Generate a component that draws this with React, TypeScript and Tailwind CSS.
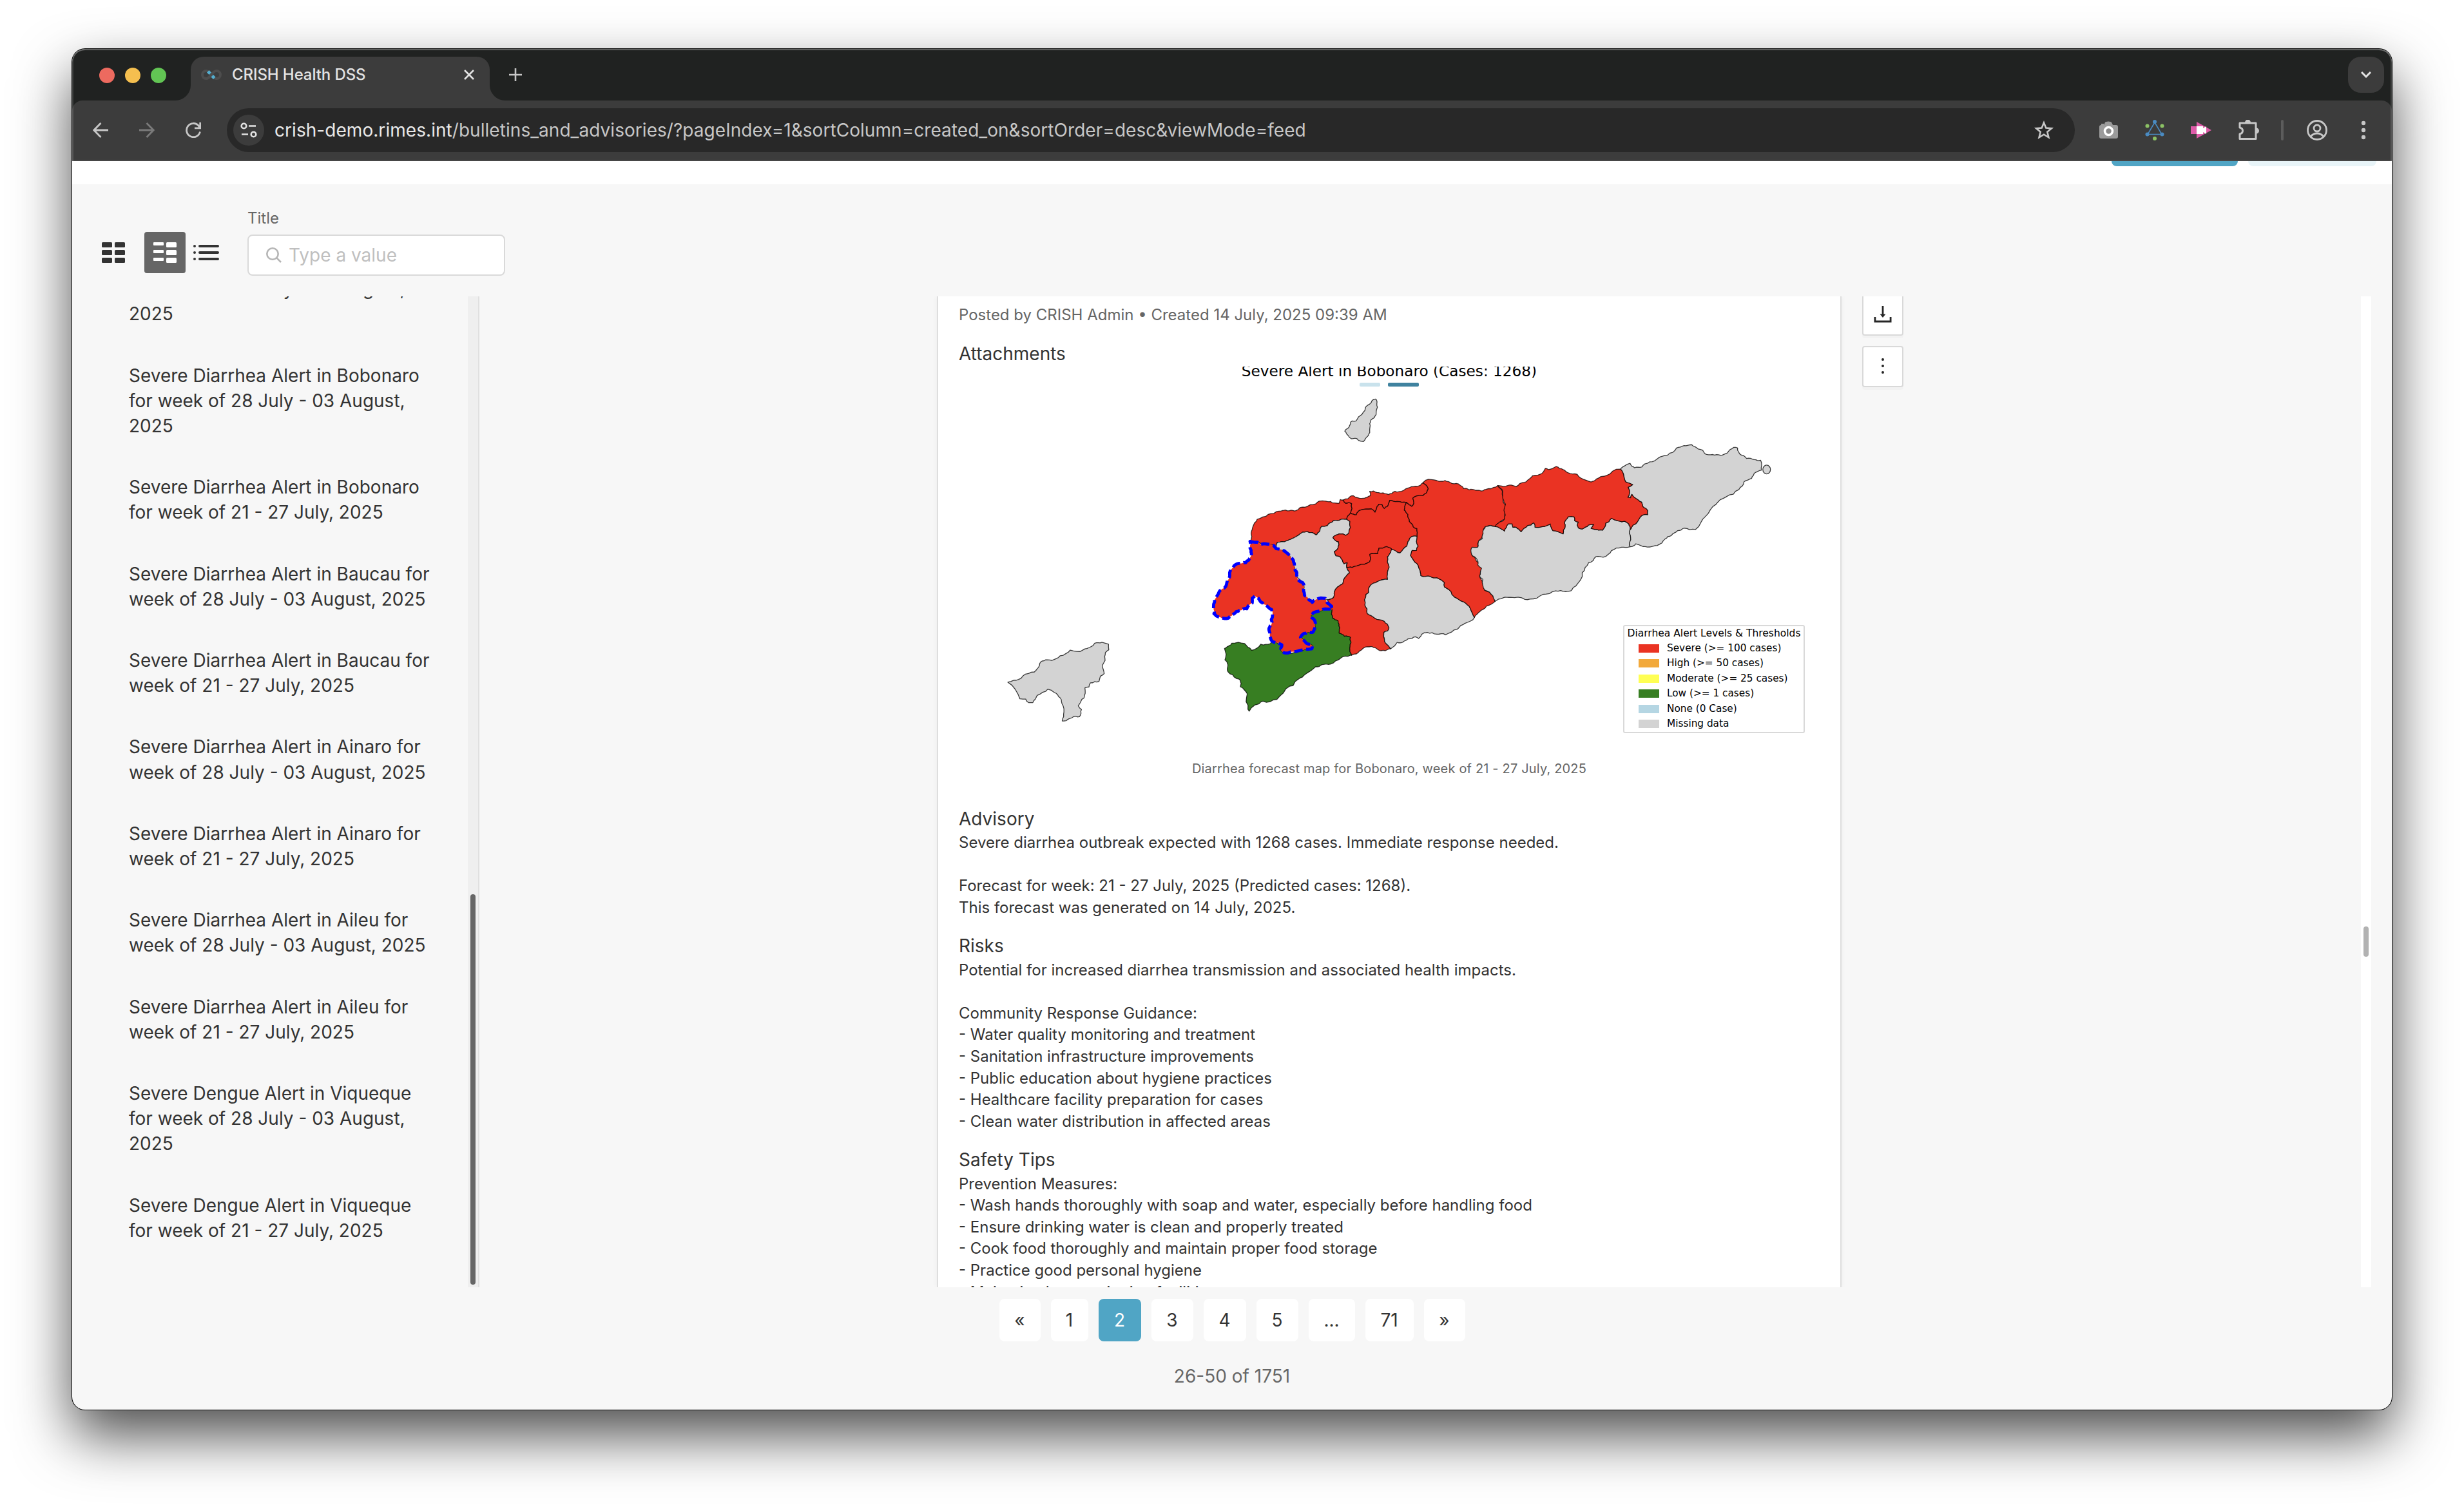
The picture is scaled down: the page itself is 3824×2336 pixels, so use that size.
import React from "react";

type Pt = [number, number];

const pts = (s: string): Pt[] =>
  s
    .trim()
    .split(/\s+/)
    .map((p) => p.split(",").map(Number) as Pt);

// Deterministic offset that is identical for both directions of a shared border.
const hash = (a: Pt, b: Pt) => {
  const v = Math.sin((a[0] + b[0]) * 12.9898 + (a[1] + b[1]) * 78.233) * 43758.5453;
  return (v - Math.floor(v)) * 2 - 1;
};

const split = (a: Pt, b: Pt, depth: number): Pt[] => {
  const dx = b[0] - a[0];
  const dy = b[1] - a[1];
  const len = Math.hypot(dx, dy);
  if (depth === 0 || len < 12) return [a];
  const forward = a[0] < b[0] || (a[0] === b[0] && a[1] < b[1]);
  const k = hash(a, b) * 0.13 * (forward ? 1 : -1);
  const m: Pt = [(a[0] + b[0]) / 2 - dy * k, (a[1] + b[1]) / 2 + dx * k];
  return [...split(a, m, depth - 1), ...split(m, b, depth - 1)];
};

const outline = (s: string) => {
  const p = pts(s);
  const out = p.flatMap((a, i) => split(a, p[(i + 1) % p.length], 2));
  return "M" + out.map(([x, y]) => `${x.toFixed(1)} ${y.toFixed(1)}`).join("L") + "Z";
};

const RED = "#ea3323";
const GREY = "#d3d3d3";
const GREEN = "#377e22";

const west: { fill: string; d: string }[] = [
  { fill: GREY, d: "825,175 829,180 833,213 827,247 803,272 797,290 797,318 791,345 768,373 745,368 738,360 712,360 697,345 681,325 685,318 700,308 708,283 716,277 733,277 745,258 775,228 778,213 795,200 808,182" },
  { fill: RED, d: "273,735 325,712 375,697 405,692 440,694 465,690 475,680 510,673 555,655 585,650 615,652 625,659 655,660 660,643 675,645 685,660 713,662 715,685 708,706 695,720 690,735 655,740 628,742 600,765 573,768 565,790 548,808 540,803 515,797 485,795 460,812 435,825 410,835 368,842 362,856 330,853 290,848 275,840 243,836 248,815 247,790 258,758" },
  { fill: RED, d: "675,645 695,640 705,630 720,625 760,638 785,633 800,625 797,605 830,610 860,612 885,620 900,615 915,605 945,605 965,593 1000,583 1018,582 1045,565 1070,593 1062,612 1045,625 1035,623 998,637 1003,660 993,675 968,657 925,652 890,648 880,675 865,685 855,668 840,665 832,675 822,702 805,687 755,692 735,714 708,706 715,685 713,662 685,660" },
  { fill: GREY, d: "362,856 368,842 410,835 435,825 460,812 485,795 515,797 540,803 548,808 565,790 573,768 600,765 628,742 655,740 690,735 705,745 700,800 685,810 655,803 626,820 652,840 650,868 632,885 640,905 660,910 678,942 693,938 690,958 703,985 675,1018 672,1035 632,1075 628,1100 600,1110 585,1105 525,1115 495,1088 490,1040 460,1005 445,950 425,905 400,880 362,870" },
  { fill: RED, d: "708,706 735,714 755,692 805,687 822,702 832,675 840,665 855,668 865,685 880,675 890,648 925,652 968,657 958,692 975,712 982,745 1000,770 1017,778 1018,815 995,815 975,840 970,860 938,892 900,875 875,862 840,870 835,895 798,898 797,933 745,950 715,960 690,958 693,938 678,942 660,910 640,905 632,885 650,868 652,840 626,820 655,803 685,810 700,800 705,745 690,735 695,720" },
  { fill: GREEN, d: "121,1337 150,1320 155,1312 215,1314 225,1325 247,1345 290,1317 335,1314 345,1303 388,1320 385,1347 400,1357 528,1338 530,1322 495,1303 475,1285 490,1267 530,1262 543,1237 537,1200 522,1185 535,1170 565,1162 600,1153 622,1157 625,1195 650,1208 658,1240 655,1265 680,1280 708,1285 710,1310 705,1345 713,1368 685,1372 650,1390 605,1411 575,1412 545,1422 500,1455 465,1480 440,1510 425,1512 365,1574 300,1582 262,1600 236,1629 230,1620 227,1548 195,1515 195,1485 178,1477 137,1445 137,1413 123,1390" },
  { fill: RED, d: "690,958 715,960 745,950 797,933 798,898 835,895 840,870 875,862 900,875 895,890 880,910 880,935 888,958 880,990 880,1015 855,1017 825,1030 805,1038 793,1055 793,1075 780,1085 775,1135 785,1173 820,1195 865,1210 887,1240 880,1255 863,1262 862,1280 870,1310 895,1338 870,1347 850,1347 820,1332 795,1329 765,1337 735,1362 713,1368 705,1345 710,1310 708,1285 680,1280 655,1265 658,1240 650,1208 625,1195 622,1157 620,1140 600,1110 628,1100 632,1075 672,1035 675,1018 703,985" },
  { fill: GREY, d: "895,1338 870,1310 862,1280 863,1262 880,1255 887,1240 865,1210 820,1195 785,1173 775,1135 780,1085 793,1075 793,1055 805,1038 825,1030 855,1017 880,1015 880,990 888,958 880,935 880,910 895,890 900,875 918,882 938,892 970,860 975,840 995,815 1018,815 1023,860 1015,880 995,880 987,903 1008,935 1030,970 1035,997 1080,1002 1110,1007 1145,1030 1145,1050 1180,1085 1235,1120 1265,1150 1285,1192 1240,1220 1205,1247 1150,1273 1110,1270 1065,1262 1040,1270 1025,1290 1010,1282 975,1292 950,1308 925,1308" },
  { fill: RED, d: "1045,565 1058,553 1110,555 1130,558 1165,560 1180,568 1200,568 1235,592 1260,598 1290,600 1325,602 1350,592 1395,578 1415,605 1418,655 1430,668 1425,715 1425,735 1400,752 1382,768 1360,765 1335,770 1325,790 1325,820 1305,835 1302,862 1272,870 1272,900 1295,930 1318,960 1310,1000 1322,1025 1332,1065 1370,1090 1382,1117 1340,1140 1310,1165 1285,1192 1265,1150 1235,1120 1180,1085 1145,1050 1145,1030 1110,1007 1080,1002 1035,997 1030,970 1008,935 987,903 995,880 1015,880 1023,860 1018,815 1017,778 1000,770 982,745 975,712 958,692 968,657 993,675 1003,660 998,637 1035,623 1045,625 1062,612 1070,593" },
];

const bobonaro =
  "240,838 275,842 290,852 350,857 362,872 400,882 425,905 443,935 447,960 458,985 460,1010 485,1030 492,1050 493,1088 510,1105 530,1122 550,1108 590,1103 600,1125 620,1140 622,1157 600,1153 565,1162 535,1170 522,1185 537,1200 543,1237 530,1262 490,1267 475,1285 495,1303 530,1322 528,1338 490,1343 445,1352 430,1352 400,1357 385,1347 388,1320 350,1307 332,1280 328,1250 340,1225 345,1180 340,1155 318,1138 290,1120 262,1093 250,1103 250,1125 225,1152 190,1160 165,1175 140,1195 120,1197 95,1190 72,1175 70,1150 75,1110 95,1075 120,1055 135,1020 145,990 155,965 180,942 220,937 243,910 245,880";

const east: { fill: string; d: string }[] = [
  { fill: GREY, d: "204,512 220,518 240,532 255,500 270,500 273,515 285,515 305,535 330,508 355,495 360,515 390,512 420,500 430,530 470,545 478,510 475,495 490,468 513,468 515,485 530,492 525,505 530,518 545,523 570,505 590,502 580,520 610,528 625,528 637,497 650,490 660,475 685,486 712,488 728,500 733,526 735,560 733,603 700,605 660,620 627,650 600,647 570,675 545,720 520,780 500,802 480,805 440,802 390,818 340,839 320,840 265,831 235,833 202,849 195,825 162,798 155,750 142,735 150,700 135,685 132,660 112,640 108,618 113,605 135,605 138,578 153,567 155,535 165,512 185,507" },
  { fill: GREY, d: "695,253 733,227 750,247 780,243 790,230 830,215 860,195 880,190 915,158 945,147 975,143 1000,162 1018,168 1033,187 1065,190 1095,190 1115,180 1140,155 1155,158 1170,190 1190,205 1220,210 1245,213 1248,258 1225,268 1210,295 1180,310 1160,345 1110,378 1070,412 1030,465 990,525 945,519 920,530 895,552 870,568 840,597 810,604 775,598 755,590 733,603 735,560 733,526 745,505 760,493 778,463 802,458 802,440 783,422 778,402 755,385 740,367 735,382 724,380 730,365 725,335 743,323 715,310 703,265" },
  { fill: RED, d: "213,327 245,330 260,325 285,332 300,318 325,310 350,283 378,277 400,250 412,255 443,241 470,255 490,270 525,276 560,303 580,311 600,298 640,282 695,253 703,265 715,310 743,323 725,335 730,365 724,380 735,382 740,367 755,385 778,402 783,422 802,440 802,458 778,463 760,493 745,505 733,526 728,500 712,488 685,486 660,475 650,490 637,497 625,528 610,528 580,520 590,502 570,505 545,523 530,518 525,505 530,492 515,485 513,468 490,468 475,495 478,510 470,545 430,530 420,500 390,512 360,515 355,495 330,508 305,535 285,515 273,515 270,500 255,500 240,532 220,518 204,512 215,497 240,478 243,460 238,440 244,412 235,390 233,355" },
];

const oecusse =
  "278,1275 300,1268 315,1266 330,1255 350,1247 370,1242 380,1232 392,1210 415,1203 447,1199 460,1190 480,1183 495,1172 540,1171 565,1162 580,1150 605,1147 628,1153 629,1171 617,1180 616,1205 607,1220 613,1247 600,1255 595,1272 565,1277 560,1290 546,1293 547,1310 543,1325 535,1330 523,1350 534,1362 527,1385 500,1389 480,1398 467,1399 473,1370 470,1350 460,1325 440,1308 417,1297 380,1317 365,1340 350,1340 340,1329 320,1328";

const legend = [
  { label: "Severe (>= 100 cases)", swatch: "bg-[#ea3323]" },
  { label: "High (>= 50 cases)", swatch: "bg-[#f2a93b]" },
  { label: "Moderate (>= 25 cases)", swatch: "bg-[#ffff54]" },
  { label: "Low (>= 1 cases)", swatch: "bg-[#377e22]" },
  { label: "None (0 Case)", swatch: "bg-[#b5d6e3]" },
  { label: "Missing data", swatch: "bg-[#d3d3d3]" },
];

function ForecastMap() {
  const stroke = { stroke: "#000", strokeOpacity: 0.75, strokeWidth: 1.3, vectorEffect: "non-scaling-stroke" as const, strokeLinejoin: "round" as const };
  return (
    <div className="relative h-[610px] overflow-hidden">
      <div className="-mt-[8px] text-center font-['DejaVu_Sans'] text-[23.2px] leading-[30px] whitespace-nowrap text-black">
        Severe Alert in Bobonaro (Cases: 1268)
      </div>
      <svg className="absolute top-0 left-0 h-[610px] w-[1336px]" viewBox="1488 568 1336 610">
        <g transform="translate(1860 560) scale(0.33333)">
          {west.map((r) => (
            <path key={r.d} d={outline(r.d)} fill={r.fill} {...stroke} />
          ))}
        </g>
        <g transform="translate(2240 640) scale(0.3954 0.3444)">
          {east.map((r) => (
            <path key={r.d} d={outline(r.d)} fill={r.fill} {...stroke} />
          ))}
          <ellipse cx="1269" cy="255" rx="15" ry="20" fill={GREY} {...stroke} />
        </g>
        <g transform="translate(1440 440) scale(0.44643 0.4847)">
          <path d={outline(oecusse)} fill={GREY} {...stroke} />
        </g>
        <g transform="translate(1860 560) scale(0.33333)">
          <path d={outline(bobonaro)} fill={RED} stroke="#0000ff" strokeWidth="4.8" strokeDasharray="13 5.500" vectorEffect="non-scaling-stroke" strokeLinejoin="round" />
        </g>
      </svg>
      <div className="absolute top-[25px] left-[622px] flex gap-3">
        <span className="h-1.5 w-8 rounded-[2px] bg-[#c9e2ec]" />
        <span className="h-1.5 w-12 rounded-[2px] bg-[#3f829f]" />
      </div>
      <div className="absolute top-[401px] left-[1031px] h-[168px] w-[282px] rounded-[3px] border-2 border-[#d9d9d9] bg-white font-['DejaVu_Sans'] text-black">
        <div className="text-center text-[15.5px] leading-[22px] whitespace-nowrap">Diarrhea Alert Levels &amp; Thresholds</div>
        <div className="flex flex-col pt-px pl-[22px]">
          {legend.map((l) => (
            <div key={l.label} className="flex h-[23.4px] items-center gap-3">
              <span className={"h-[13px] w-8 " + l.swatch} />
              <span className="text-[15.3px] leading-[23px] whitespace-nowrap">{l.label}</span>
            </div>
          ))}
        </div>
      </div>
    </div>
  );
}

const bulletins: string[][] = [
  ["for week of 28 July - 03 August,", "2025"],
  ["Severe Diarrhea Alert in Bobonaro", "for week of 28 July - 03 August,", "2025"],
  ["Severe Diarrhea Alert in Bobonaro", "for week of 21 - 27 July, 2025"],
  ["Severe Diarrhea Alert in Baucau for", "week of 28 July - 03 August, 2025"],
  ["Severe Diarrhea Alert in Baucau for", "week of 21 - 27 July, 2025"],
  ["Severe Diarrhea Alert in Ainaro for", "week of 28 July - 03 August, 2025"],
  ["Severe Diarrhea Alert in Ainaro for", "week of 21 - 27 July, 2025"],
  ["Severe Diarrhea Alert in Aileu for", "week of 28 July - 03 August, 2025"],
  ["Severe Diarrhea Alert in Aileu for", "week of 21 - 27 July, 2025"],
  ["Severe Dengue Alert in Viqueque", "for week of 28 July - 03 August,", "2025"],
  ["Severe Dengue Alert in Viqueque", "for week of 21 - 27 July, 2025"],
];

const sections: { title: string; lines: string[] }[] = [
  {
    title: "Advisory",
    lines: [
      "Severe diarrhea outbreak expected with 1268 cases. Immediate response needed.",
      "",
      "Forecast for week: 21 - 27 July, 2025 (Predicted cases: 1268).",
      "This forecast was generated on 14 July, 2025.",
    ],
  },
  {
    title: "Risks",
    lines: [
      "Potential for increased diarrhea transmission and associated health impacts.",
      "",
      "Community Response Guidance:",
      "- Water quality monitoring and treatment",
      "- Sanitation infrastructure improvements",
      "- Public education about hygiene practices",
      "- Healthcare facility preparation for cases",
      "- Clean water distribution in affected areas",
    ],
  },
  {
    title: "Safety Tips",
    lines: [
      "Prevention Measures:",
      "- Wash hands thoroughly with soap and water, especially before handling food",
      "- Ensure drinking water is clean and properly treated",
      "- Cook food thoroughly and maintain proper food storage",
      "- Practice good personal hygiene",
      "- Maintain clean sanitation facilities",
    ],
  },
];

const pages = [
  { t: "«", w: "w-[64px]" },
  { t: "1", w: "w-[58px]" },
  { t: "2", w: "w-[66px]", active: true },
  { t: "3", w: "w-[65px]" },
  { t: "4", w: "w-[66px]" },
  { t: "5", w: "w-[65px]" },
  { t: "...", w: "w-[72px]" },
  { t: "71", w: "w-[75px]" },
  { t: "»", w: "w-[64px]" },
];

function TabStrip() {
  return (
    <div className="flex h-20 shrink-0 items-center bg-[#202221] pr-3 pl-[42px]">
      <div className="flex gap-4 pt-0.5">
        <span className="size-6 rounded-full bg-[#ed6a5f]" />
        <span className="size-6 rounded-full bg-[#f5bf4f]" />
        <span className="size-6 rounded-full bg-[#62c554]" />
      </div>
      <svg className="ml-[14px] size-6 self-end" viewBox="0 0 24 24"><path d="M24 0V24H0A24 24 0 0 0 24 0Z" fill="#3c3c3c" /></svg>
      <div className="mt-3 flex h-[68px] w-[464px] items-center rounded-t-[20px] bg-[#3c3c3c] pr-6 pb-3 pl-4">
        <svg className="h-4 w-8" viewBox="0 0 32 16" fill="none">
          <path d="M16 8C12.500 3 10.500 2 8 2a6 6 0 1 0 0 12C10.500 14 12.500 13 16 8S21.500 2 24 2a6 6 0 1 1 0 12C21.500 14 19.500 13 16 8Z" stroke="#4d4d4d" strokeWidth="4" />
          <path d="M12.500 1l3.500 3.500-3.500 3.500L9 4.500ZM19 8l3.500 3.500L19 15l-3.500-3.500Z" fill="#54aed0" />
        </svg>
        <span className="ml-4 text-[24px] leading-8 font-medium tracking-[-0.1px] whitespace-nowrap text-[#e3e3e3]">CRISH Health DSS</span>
        <svg className="ml-auto size-4" viewBox="0 0 16 16" stroke="#e3e3e3" strokeWidth="2.600"><path d="M1 1L15 15M15 1L1 15" /></svg>
      </div>
      <svg className="size-6 self-end" viewBox="0 0 24 24"><path d="M0 0V24H24A24 24 0 0 1 0 0Z" fill="#3c3c3c" /></svg>
      <svg className="ml-1.5 size-5" viewBox="0 0 20 20" stroke="#c7c7c7" strokeWidth="2.600"><path d="M10 0V20M0 10H20" /></svg>
      <span className="ml-auto flex size-14 items-center justify-center rounded-[20px] bg-[#3c3c3c]">
        <svg className="h-[10px] w-4" viewBox="0 0 16 10" fill="none" stroke="#e3e3e3" strokeWidth="3"><path d="M1 1l7 7 7-7" /></svg>
      </span>
    </div>
  );
}

function Toolbar() {
  return (
    <div className="bg-[#202221]">
      <div className="flex h-[94px] shrink-0 items-center rounded-t-[16px] border-b-2 border-[#464646] bg-[#3c3c3c] pl-8">
        <svg className="size-6" viewBox="0 0 24 24" fill="none" stroke="#c7c7c7" strokeWidth="2.800"><path d="M24 12H2M12.500 1L1.800 12l10.700 11" /></svg>
        <svg className="ml-12 size-6" viewBox="0 0 24 24" fill="none" stroke="#7a7a7a" strokeWidth="2.800"><path d="M0 12H22M11.500 1l10.700 11-10.700 11" /></svg>
        <svg className="ml-12 size-6" viewBox="0 0 24 24" fill="none" stroke="#c7c7c7" strokeWidth="2.800"><path d="M22.500 14.500A10.600 10.600 0 1 1 20.200 5.200L22 8M22.700 0V8.800H14" /></svg>
        <div className="ml-10 flex h-[68px] w-[2868px] items-center rounded-full bg-[#282828] pr-8 pl-2.5">
          <span className="flex size-12 items-center justify-center rounded-full bg-[#3c3c3c]">
            <svg className="h-6 w-[26px]" viewBox="0 0 26 24" fill="none" stroke="#e3e3e3" strokeWidth="2.600">
              <circle cx="5.500" cy="5.500" r="3.800" /><path d="M13 5.500H24M2 18.500H12" /><circle cx="20.500" cy="18.500" r="3.800" />
            </svg>
          </span>
          <span className="ml-4 text-[28px] leading-9 tracking-[0.05px] whitespace-nowrap text-[#c7c7c7]">
            <span className="text-[#e8e8e8]">crish-demo.rimes.int</span>/bulletins_and_advisories/?pageIndex=1&amp;sortColumn=created_on&amp;sortOrder=desc&amp;viewMode=feed
          </span>
          <svg className="ml-auto size-8" viewBox="0 0 32 32" fill="none" stroke="#c7c7c7" strokeWidth="2.600"><path d="M16 4.500l3.300 8 8.600.7-6.600 5.600 2.100 8.500L16 22.700l-7.400 4.600 2.100-8.500-6.600-5.600 8.600-.7Z" /></svg>
        </div>
        <div className="ml-9 flex gap-10">
          <svg className="size-8" viewBox="0 0 32 32">
            <path d="M2 11q0-3 3-3V6h4v2l2-4q1-1.500 5-1.500T21 4l2 4h5q3 0 3 3v15q0 3-3 3H5q-3 0-3-3Z" fill="#9b9b9b" />
            <circle cx="16.500" cy="17.500" r="6" fill="#8a8a8a" stroke="#fff" strokeWidth="3.600" />
          </svg>
          <svg className="size-8" viewBox="0 0 32 32">
            <path d="M16 4L5 22.500H27Z" fill="none" stroke="#4a8bc2" strokeWidth="1.600" />
            <g fill="#4a8bc2"><circle cx="16" cy="3" r="3" /><circle cx="4.500" cy="22.500" r="3" /><circle cx="27.500" cy="22.500" r="3" /></g>
            <g fill="#8cc265"><circle cx="4.500" cy="9.500" r="3" /><circle cx="27.500" cy="9.500" r="3" /><circle cx="16" cy="29" r="3" /></g>
          </svg>
          <svg className="size-8" viewBox="0 0 32 32">
            <path d="M0 10H9V3L32 16 9 29V22H0Z" fill="#dd5ba8" />
            <path d="M9 10H19V13L24 10V22L19 19V22H9Z" fill="#fff" />
          </svg>
          <svg className="h-8 w-[34px]" viewBox="0 0 34 32" fill="none" stroke="#c7c7c7" strokeWidth="3" strokeLinejoin="round">
            <path d="M4 5H29V29.500H4V22Q8.500 21 8.500 17T4 12Z" />
            <path d="M12 4.500a4.500 5 0 0 1 9 0ZM29.500 12.500a4.500 4.500 0 0 1 0 9Z" fill="#c7c7c7" stroke="none" />
          </svg>
        </div>
        <span className="ml-[34px] h-8 w-1 rounded-full bg-[#5c5c5c]" />
        <svg className="ml-9 size-8" viewBox="0 0 32 32" fill="none" stroke="#c7c7c7" strokeWidth="2.800">
          <circle cx="16" cy="16" r="14.500" /><circle cx="16" cy="13" r="5" /><path d="M6 26q4-5 10-5t10 5" />
        </svg>
        <svg className="ml-10 size-8" viewBox="0 0 32 32" fill="#c7c7c7"><circle cx="16" cy="5" r="3.200" /><circle cx="16" cy="16" r="3.200" /><circle cx="16" cy="27" r="3.200" /></svg>
      </div>
    </div>
  );
}

function Filters() {
  return (
    <div className="flex h-[174px] shrink-0 items-end pb-8 pl-[46px]">
      <svg className="mb-5 h-8 w-9" viewBox="0 0 36 32" fill="#333">
        {[0, 12, 24].map((y) => (
          <g key={y}><rect y={y} width="16" height="8" rx="1.500" /><rect x="20" y={y} width="16" height="8" rx="1.500" /></g>
        ))}
      </svg>
      <span className="mb-1 ml-[30px] flex h-16 w-16 items-center justify-center rounded-[4px] bg-[#666]">
        <svg className="h-8 w-9" viewBox="0 0 36 32" fill="#fff">
          {[0, 12, 24].map((y) => (
            <g key={y}><rect y={y} width="16" height="5" rx="1" /><rect x="20" y={y} width="16" height="8" rx="1.500" /></g>
          ))}
        </svg>
      </span>
      <svg className="mb-6 ml-3 h-6 w-10" viewBox="0 0 40 24" fill="#333">
        {[0, 10, 20].map((y) => (
          <g key={y}><circle cx="2" cy={y + 2} r="2" /><rect x="8" y={y} width="32" height="4" rx="2" /></g>
        ))}
      </svg>
      <div className="ml-11">
        <div className="pb-2 text-[24px] leading-[34px] text-[#666]">Title</div>
        <div className="flex h-16 w-[400px] items-center rounded-lg border-2 border-[#d9d9d9] bg-white pl-[27px]">
          <svg className="size-6" viewBox="0 0 24 24" fill="none" stroke="#b5b5b5" strokeWidth="2.600"><circle cx="10" cy="10" r="8.700" /><path d="M16.200 16.200L23 23" /></svg>
          <span className="ml-[11px] text-[28px] leading-[39px] text-[#bfbfbf]">Type a value</span>
        </div>
      </div>
    </div>
  );
}

function Feed() {
  return (
    <div className="flex h-[1538px] shrink-0 overflow-hidden pr-8">
      <aside className="flex w-[614px] flex-col justify-end overflow-hidden pb-[68px] pl-[88px]">
        <div className="flex flex-col gap-14">
          {bulletins.map((b, i) => (
            <div key={i} className="shrink-0 text-[28px] leading-[39.2px] whitespace-nowrap text-[#333]">
              {b.map((l) => (
                <div key={l}>{l}</div>
              ))}
            </div>
          ))}
        </div>
      </aside>
      <div className="flex w-[18px] items-end border-r-2 border-[#e0e0e0] bg-[#efefef] px-1 pb-1">
        <span className="h-[606px] w-2 rounded-full bg-[#666]" />
      </div>
      <main className="flex min-w-0 flex-1 items-start pl-[710px]">
        <article className="h-[1538px] w-[1404px] overflow-hidden border-x-2 border-[#dedede] bg-white px-8 pt-3 text-[#333] shadow-[0_0_8px_rgba(0,0,0,0.05)]">
          <p className="text-[24px] leading-[33.6px] whitespace-nowrap text-[#666]">Posted by CRISH Admin • Created 14 July, 2025 09:39 AM</p>
          <h3 className="mt-6 text-[28px] leading-[39.2px]">Attachments</h3>
          <ForecastMap />
          <p className="mb-[45px] text-center text-[20px] leading-7 tracking-[0.17px] whitespace-nowrap text-[#666]">Diarrhea forecast map for Bobonaro, week of 21 - 27 July, 2025</p>
          {sections.map((s) => (
            <section key={s.title} className="mb-6">
              <h3 className="text-[28px] leading-[39.2px]">{s.title}</h3>
              {s.lines.map((l, i) => (
                <p key={i} className="h-[33.6px] text-[24px] leading-[33.6px] whitespace-nowrap">{l}</p>
              ))}
            </section>
          ))}
        </article>
        <div className="-mt-[3px] ml-8 flex flex-col gap-4">
          <span className="flex size-16 items-center justify-center rounded-[4px] border-2 border-[#d9d9d9] bg-white pb-0.5 shadow-[0_4px_0_rgba(0,0,0,0.02)]">
            <svg className="h-[26px] w-7 shrink-0" viewBox="0 0 28 26" fill="none" stroke="#262626" strokeWidth="2.800"><path d="M14 0V14M1.900 17V24H26.100V17" /><path d="M9.500 12.500H18.500L14 18Z" fill="#262626" stroke="none" /></svg>
          </span>
          <span className="flex size-16 items-center justify-center rounded-[4px] border-2 border-[#d9d9d9] bg-white pb-0.5 shadow-[0_4px_0_rgba(0,0,0,0.02)]">
            <svg className="h-6 w-1" viewBox="0 0 4 24" fill="#262626"><circle cx="2" cy="2" r="2" /><circle cx="2" cy="12" r="2" /><circle cx="2" cy="22" r="2" /></svg>
          </span>
        </div>
      </main>
      <div className="w-4 bg-white px-1 pt-[978px]">
        <div className="h-[47px] w-2 rounded-full bg-[#b2b2b2]" />
      </div>
    </div>
  );
}

export default function App() {
  return (
    <div className="h-[2336px] w-[3824px] overflow-hidden bg-white px-[112px] pt-[76px] font-['Inter',sans-serif]">
      <div className="relative flex h-[2112px] w-[3600px] flex-col overflow-hidden rounded-[20px] bg-[#f7f7f7] shadow-[0_0_0_1px_#000,0_40px_88px_rgba(0,0,0,0.7)]">
        <TabStrip />
        <Toolbar />
        <div className="flex h-9 shrink-0 items-start justify-end gap-4 bg-white pr-6">
          <span className="h-2 w-[196px] rounded-b-lg bg-[#50a5c5]" />
          <span className="h-2 w-[199px] rounded-b-lg bg-[#e8f4f8]" />
        </div>
        <Filters />
        <Feed />
        <div className="flex h-[102px] shrink-0 items-start justify-center gap-4 pt-[18px]">
          {pages.map((p) => (
            <span key={p.t} className={"flex h-[66px] items-center justify-center rounded-lg text-[28px] " + p.w + (p.active ? " bg-[#50a5c5] text-white" : " bg-white text-[#333]")}>
              {p.t}
            </span>
          ))}
        </div>
        <div className="pt-[17px] text-center text-[28px] leading-[39.2px] text-[#666]">26-50 of 1751</div>
        <div className="pointer-events-none absolute inset-x-0 top-0 h-[174px] rounded-t-[20px] shadow-[inset_0_2px_0_rgba(255,255,255,0.28),inset_2px_0_0_rgba(255,255,255,0.14),inset_-2px_0_0_rgba(255,255,255,0.14)]" />
      </div>
    </div>
  );
}
